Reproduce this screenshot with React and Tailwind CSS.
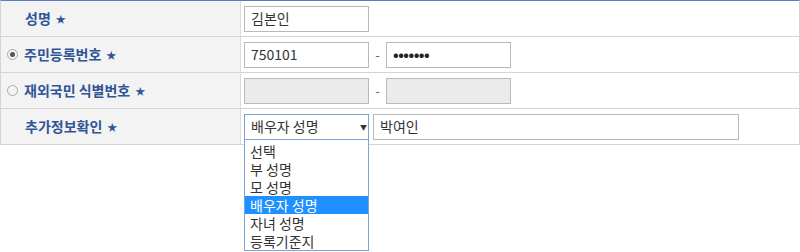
import React from "react";

const font = { fontFamily: '"Noto Sans CJK KR", "Noto Sans", sans-serif' };

function Radio({ checked }) {
  return (
    <span className="inline-flex w-[11px] h-[11px] rounded-full border border-[#a9a9a9] bg-[#f4f4f4] items-center justify-center mr-[6px]">
      {checked && <span className="w-[5px] h-[5px] rounded-full bg-[#555]" />}
    </span>
  );
}

function Star() {
  return <span className="ml-[5px] text-[10px] text-[#2f5597]">★</span>;
}

function Row({ label, radio, children }) {
  return (
    <div className="flex h-[36px] border-b border-[#d4d4d4]">
      <div className="w-[240px] shrink-0 bg-[#f3f3f3] border-r border-[#dcdcdc] flex items-center">
        {radio !== undefined ? (
          <div className="flex items-center pl-[6px]">
            <Radio checked={radio} />
            <span className="text-[14px] font-bold text-[#2f5597]">{label}</span>
            <Star />
          </div>
        ) : (
          <div className="flex items-center pl-[24px]">
            <span className="text-[14px] font-bold text-[#2f5597]">{label}</span>
            <Star />
          </div>
        )}
      </div>
      <div className="flex-1 flex items-center pl-[3px] relative">{children}</div>
    </div>
  );
}

function Input({ value, w, disabled, password }) {
  return (
    <div
      className={`h-[26px] border border-[#b9b9b9] flex items-center px-[6px] text-[14px] text-[#333] ${disabled ? "bg-[#ebebeb]" : "bg-white"}`}
      style={{ width: w }}
    >
      {password ? <span className="text-[15px] font-bold text-[#222] tracking-[-0.5px]">•••••••</span> : value}
    </div>
  );
}

export default function App() {
  const options = ["선택", "부 성명", "모 성명", "배우자 성명", "자녀 성명", "등록기준지"];
  return (
    <div className="w-[800px] h-[252px] bg-white relative" style={font}>
      <div className="border-t border-[#5b7dbc] border-l border-l-[#d4d4d4] border-r border-r-[#d4d4d4]">
        <Row label="성명">
          <Input value="김본인" w={125} />
        </Row>
        <Row label="주민등록번호" radio={true}>
          <Input value="750101" w={125} />
          <span className="w-[17px] text-center text-[#666] text-[13px]">-</span>
          <Input w={125} password />
        </Row>
        <Row label="재외국민 식별번호" radio={false}>
          <Input value="" w={125} disabled />
          <span className="w-[17px] text-center text-[#666] text-[13px]">-</span>
          <Input value="" w={125} disabled />
        </Row>
        <Row label="추가정보확인">
          <div className="relative">
            <div className="w-[125px] h-[26px] border border-[#7da2d8] bg-white flex items-center pl-[6px] text-[14px] text-[#333] relative">
              배우자 성명
              <span className="absolute right-[1px] top-[8px] text-[7px] leading-[8px] text-[#333]">▼</span>
            </div>
            <div className="absolute left-0 top-[26px] w-[125px] border border-[#7da2d8] border-t-0 bg-white z-10 pt-[2px]">
              {options.map((o) => (
                <div
                  key={o}
                  className={`h-[18px] overflow-hidden flex items-center pl-[5px] ${o === "배우자 성명" ? "bg-[#1e90ff] text-white" : "text-[#333]"}`}
                >
                  <span className="text-[14px] leading-[18px]">{o}</span>
                </div>
              ))}
            </div>
          </div>
          <div className="ml-[4px]">
            <Input value="박여인" w={366} />
          </div>
        </Row>
      </div>
    </div>
  );
}
